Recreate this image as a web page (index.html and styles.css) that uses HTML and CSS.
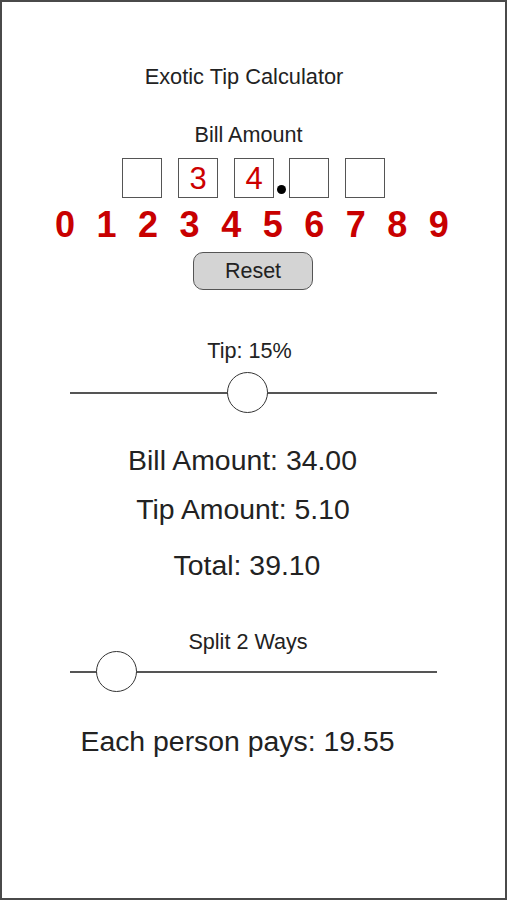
FILE: index.html
```html
<!DOCTYPE html>
<html lang="en">
<head>
    <meta charset="UTF-8">
    <meta name="viewport" content="width=device-width, initial-scale=1.0">
    <title>Exotic Tip Calculator</title>
    <link rel="stylesheet" href="styles.css">
</head>
<body>

    <div class="screen">
        <h1 class="title">Exotic Tip Calculator</h1>

        <div class="label bill-label">Bill Amount</div>

        <div class="digit-boxes">
            <div class="digit-box"></div>
            <div class="digit-box">3</div>
            <div class="digit-box">4</div>
            <div class="decimal-dot"></div>
            <div class="digit-box"></div>
            <div class="digit-box"></div>
        </div>

        <div class="keypad">
            <span>0</span><span>1</span><span>2</span><span>3</span><span>4</span>
            <span>5</span><span>6</span><span>7</span><span>8</span><span>9</span>
        </div>

        <div class="reset-row">
            <button class="reset-button">Reset</button>
        </div>

        <div class="label tip-label">Tip: 15%</div>
        <div class="slider tip-slider">
            <div class="thumb" style="left: 157px;"></div>
        </div>

        <div class="result bill-result">Bill Amount: 34.00</div>
        <div class="result tip-result">Tip Amount: 5.10</div>
        <div class="result total-result">Total: 39.10</div>

        <div class="label split-label">Split 2 Ways</div>
        <div class="slider split-slider">
            <div class="thumb" style="left: 26px;"></div>
        </div>

        <div class="result each-result">Each person pays: 19.55</div>
    </div>

</body>
</html>
```

FILE: styles.css
```css
body {
    margin: 0;
    font-family: 'Liberation Sans', Arial, sans-serif;
    background-color: #ffffff;
    color: #222;
}

.screen {
    width: 507px;
    height: 900px;
    box-sizing: border-box;
    border: 2px solid #4a4a4a;
    overflow: hidden;
}

.title {
    margin: 62px 0 0 0;
    padding-right: 19px;
    font-size: 21.8px;
    font-weight: normal;
    line-height: 26px;
    text-align: center;
}

.label {
    font-size: 21.6px;
    line-height: 26px;
    text-align: center;
}

.bill-label {
    margin-top: 32px;
    padding-right: 10px;
}

.digit-boxes {
    display: flex;
    margin-top: 10px;
    padding-left: 120px;
    height: 40px;
}

.digit-box {
    width: 40px;
    height: 40px;
    box-sizing: border-box;
    border: 1.5px solid #555;
    margin-right: 16px;
    color: #cc0000;
    font-size: 31px;
    line-height: 39px;
    text-align: center;
}

.digit-box:nth-child(3) {
    margin-right: 3px;
}

.decimal-dot {
    width: 9px;
    height: 9px;
    border-radius: 50%;
    background-color: #000;
    align-self: flex-end;
    margin: 0 3px 4px 0;
}

.keypad {
    display: flex;
    gap: 21.5px;
    margin-top: 7px;
    padding-left: 53px;
    color: #c80000;
    font-size: 36px;
    font-weight: bold;
    line-height: 40px;
}

.reset-row {
    margin-top: 7px;
    padding-left: 191px;
}

.reset-button {
    display: block;
    width: 120px;
    height: 38px;
    border: 1.5px solid #555;
    border-radius: 10px;
    background-color: #d4d4d4;
    color: #222;
    font-family: 'Liberation Sans', Arial, sans-serif;
    font-size: 21.5px;
    padding: 0;
}

.tip-label {
    margin-top: 48px;
    padding-right: 8px;
}

.slider {
    position: relative;
    width: 367px;
    height: 2px;
    margin-left: 68px;
    background-color: #555;
}

.thumb {
    position: absolute;
    top: -20px;
    width: 41px;
    height: 41px;
    box-sizing: border-box;
    border: 1.5px solid #333;
    border-radius: 50%;
    background-color: #fff;
}

.tip-slider {
    margin-top: 28px;
}

.result {
    font-size: 28.4px;
    line-height: 34px;
    text-align: center;
}

.bill-result {
    margin-top: 49px;
    padding-right: 22px;
}

.tip-result {
    margin-top: 15px;
    padding-right: 21px;
}

.total-result {
    margin-top: 22px;
    padding-right: 13px;
}

.split-label {
    margin-top: 47px;
    padding-right: 11px;
}

.split-slider {
    margin-top: 16px;
}

.each-result {
    margin-top: 51px;
    padding-right: 32px;
}
```
